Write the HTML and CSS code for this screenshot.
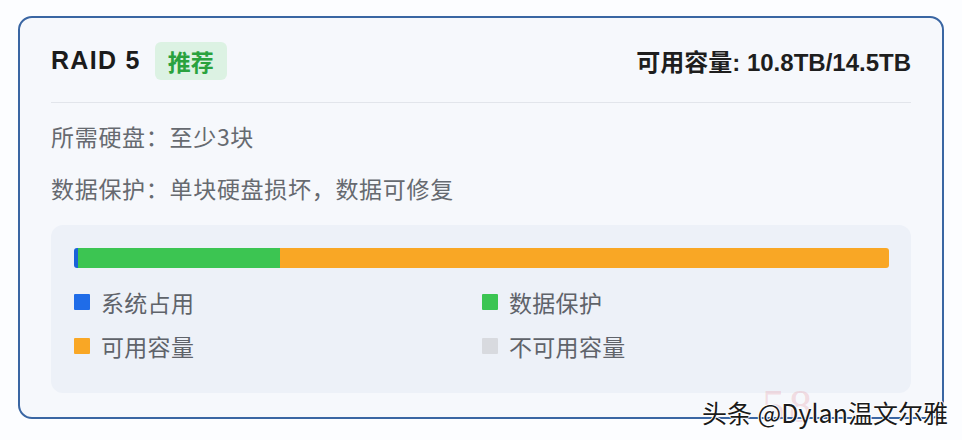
FILE: index.html
```html
<!DOCTYPE html>
<html lang="zh-CN">
<head>
<meta charset="utf-8">
<link rel="stylesheet" href="styles.css">
</head>
<body>
<div class="page">
  <div class="card">
    <div class="header">
      <div class="title-group">
        <span class="title">RAID 5</span>
        <span class="badge">推荐</span>
      </div>
      <div class="capacity">可用容量: 10.8TB/14.5TB</div>
    </div>
    <div class="divider"></div>
    <div class="info">所需硬盘：至少3块</div>
    <div class="info info-second">数据保护：单块硬盘损坏，数据可修复</div>
    <div class="panel">
      <div class="bar">
        <div class="seg seg-sys" style="width:4px"></div>
        <div class="seg seg-prot" style="width:202px"></div>
        <div class="seg seg-free"></div>
      </div>
      <div class="legend">
        <div class="legend-item"><span class="sw sw-sys"></span>系统占用</div>
        <div class="legend-item"><span class="sw sw-prot"></span>数据保护</div>
        <div class="legend-item"><span class="sw sw-free"></span>可用容量</div>
        <div class="legend-item"><span class="sw sw-na"></span>不可用容量</div>
      </div>
    </div>
  </div>
  <div class="wm-faint">58</div>
  <div class="watermark">头条 @Dylan温文尔雅</div>
</div>
</body>
</html>
```
FILE: styles.css
```css
* { box-sizing: border-box; }
html, body {
  margin: 0;
  padding: 0;
  background: #fcfdff;
}
body {
  font-family: "Noto Sans CJK SC", "Noto Sans", sans-serif;
  width: 962px;
  height: 440px;
  overflow: hidden;
}
.page {
  position: relative;
  width: 962px;
  height: 440px;
  padding: 16px 0 0 18px;
}
.card {
  width: 926px;
  height: 403px;
  border: 2px solid #3a66a3;
  border-radius: 14px;
  background: #f6f8fc;
  padding: 24px 31px 0 31px;
}
.header {
  display: flex;
  align-items: center;
  justify-content: space-between;
  height: 37px;
}
.title-group {
  display: flex;
  align-items: center;
}
.title {
  font-family: "Liberation Sans", Arial, sans-serif;
  font-weight: 700;
  font-size: 25px;
  letter-spacing: 1.3px;
  color: #1b1b1b;
}
.badge {
  margin-left: 14px;
  width: 72px;
  height: 38px;
  display: flex;
  align-items: center;
  justify-content: center;
  background: #dcf2e3;
  border-radius: 6px;
  color: #2aa23e;
  font-weight: 700;
  font-size: 23px;
}
.capacity {
  font-family: "Liberation Sans", "Noto Sans CJK SC", sans-serif;
  font-weight: 700;
  font-size: 24px;
  color: #1e1e1e;
}
.divider {
  margin-top: 23px;
  height: 1px;
  background: #e2e5eb;
}
.info {
  margin-top: 18px;
  font-size: 23px;
  line-height: 30px;
  letter-spacing: 0.7px;
  color: #666a70;
}
.info-second {
  margin-top: 22px;
}
.panel {
  margin-top: 22px;
  height: 168px;
  background: #edf1f8;
  border-radius: 12px;
  padding: 23px 22px 0 23px;
}
.bar {
  display: flex;
  height: 20px;
  border-radius: 3px;
  overflow: hidden;
}
.seg { height: 100%; }
.seg-sys { background: #1a63d8; }
.seg-prot { background: #3cc552; }
.seg-free { flex: 1; background: #f9a725; }
.legend {
  margin-top: 19px;
  display: grid;
  grid-template-columns: 408px 1fr;
  row-gap: 14px;
}
.legend-item {
  display: flex;
  align-items: center;
  font-size: 23px;
  line-height: 30px;
  letter-spacing: 0.3px;
  color: #5f636a;
}
.sw {
  width: 16px;
  height: 16px;
  margin-right: 11px;
  border-radius: 1px;
}
.sw-sys { background: #1f6ce8; }
.sw-prot { background: #3bc552; }
.sw-free { background: #f9a725; }
.sw-na { background: #d8dadf; }
.wm-faint {
  position: absolute;
  left: 762px;
  top: 380px;
  font-family: "Liberation Serif", serif;
  font-size: 46px;
  color: rgba(230, 150, 160, 0.3);
  letter-spacing: 4px;
}
.watermark {
  position: absolute;
  left: 702px;
  top: 396px;
  font-size: 25px;
  line-height: 32px;
  color: #1a1a1a;
  text-shadow: -1px 0 #fff, 1px 0 #fff, 0 -1px #fff, 0 1px #fff;
}
```
